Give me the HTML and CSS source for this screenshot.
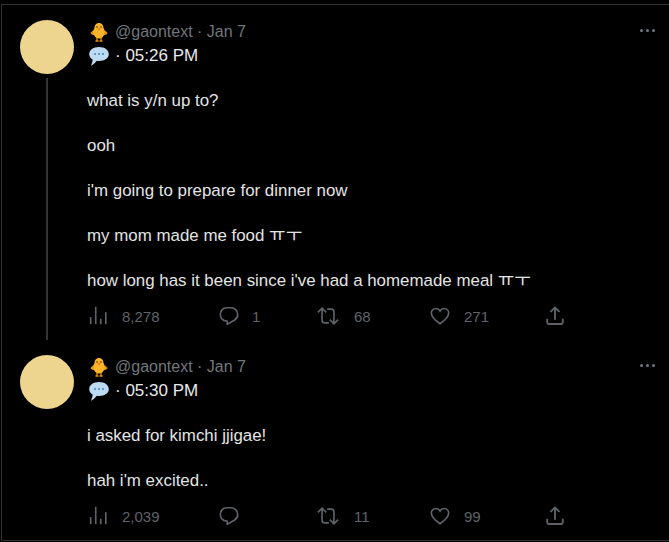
FILE: index.html
```html
<!DOCTYPE html>
<html lang="en">
<head>
<meta charset="UTF-8">
<meta name="viewport" content="width=device-width, initial-scale=1.0">
<title>@gaontext</title>
<link rel="stylesheet" href="styles.css">
</head>
<body>

<svg class="defs" width="0" height="0">
    <symbol id="chick" viewBox="0 0 20 20">
        <path d="M1.5 11 C3 9 4 8.500 5 8.500 L5 13 C3.500 13 2 12.500 1.500 11Z" fill="#e8930c"/>
        <path d="M18.500 11 C17 9 16 8.500 15 8.500 L15 13 C16.500 13 18 12.500 18.500 11Z" fill="#e8930c"/>
        <path d="M10 1 C13 1 14.500 3.500 14.500 6 C16 8 16 11 15 13 C14 15.500 12 16.500 10 16.500 C8 16.500 6 15.500 5 13 C4 11 4 8 5.500 6 C5.500 3.500 7 1 10 1Z" fill="#fdb42a"/>
        <path d="M8 16 L8 18.500 M12 16 L12 18.500 M6.500 19 L9.500 19 M10.500 19 L13.500 19" stroke="#e8930c" stroke-width="1.300"/>
        <circle cx="8" cy="5" r=".8" fill="#4a2c10"/>
        <circle cx="12" cy="5" r=".8" fill="#4a2c10"/>
        <path d="M8.500 6.500 L11.500 6.500 L10 8.200Z" fill="#e2571e"/>
    </symbol>
    <symbol id="bubble" viewBox="0 0 20 20">
        <path d="M10 1 C15.500 1 19.800 3.800 19.800 8.300 C19.800 12.300 15.500 15 10 15 C9.200 15 8.500 14.900 7.800 14.800 C6.500 16.500 4.500 18.500 1.800 19.800 C3 17.500 3.600 15.500 3.600 13.500 C1.500 12.200 .200 10.400 .200 8.300 C.200 3.800 4.500 1 10 1Z" fill="#bddcf4"/>
        <circle cx="6" cy="8" r="1" fill="#3b88c3"/>
        <circle cx="10" cy="8" r="1" fill="#3b88c3"/>
        <circle cx="14" cy="8" r="1" fill="#3b88c3"/>
    </symbol>
    <symbol id="views" viewBox="0 0 24 24">
        <path d="M4 21 V13 M9.500 21 V2 M15 21 V15 M20.500 21 V8" fill="none" stroke="currentColor" stroke-width="1.800"/>
    </symbol>
    <symbol id="reply" viewBox="0 0 24 24">
        <path d="M9.500 3 H14 C18 3 21.500 6.200 21.500 10.300 C21.500 13 20 15.200 17.800 16.600 L10 21 V17.500 H9.500 C5.500 17.500 2.500 14.200 2.500 10.300 C2.500 6.200 5.500 3 9.500 3Z" fill="none" stroke="currentColor" stroke-width="1.800" stroke-linejoin="round"/>
    </symbol>
    <symbol id="retweet" viewBox="0 0 24 24">
        <path d="M1 8 L5.500 3.500 L10 8 M5.500 4 V16.500 C5.500 18.200 6.800 19.500 8.500 19.500 H13 M23 16 L18.500 20.500 L14 16 M18.500 20 V7.500 C18.500 5.800 17.200 4.500 15.500 4.500 H11" fill="none" stroke="currentColor" stroke-width="1.800"/>
    </symbol>
    <symbol id="like" viewBox="0 0 24 24">
        <path d="M12 20.500 C7 17 2.500 13.500 2.500 8.800 C2.500 5.800 4.800 3.800 7.300 3.800 C9.300 3.800 11 4.800 12 6.800 C13 4.800 14.700 3.800 16.700 3.800 C19.200 3.800 21.500 5.800 21.500 8.800 C21.500 13.500 17 17 12 20.500Z" fill="none" stroke="currentColor" stroke-width="1.800" stroke-linejoin="round"/>
    </symbol>
    <symbol id="share" viewBox="0 0 24 24">
        <path d="M7 7.500 L12 2.800 L17 7.500 M12 3.500 V16 M3.500 15 V19 C3.500 20 4.200 20.700 5.200 20.700 H18.800 C19.800 20.700 20.500 20 20.500 19 V15" fill="none" stroke="currentColor" stroke-width="2"/>
    </symbol>
</svg>

<div id="container">

    <div class="tweet tweet-first">
        <div class="side">
            <div class="avatar"></div>
            <div class="thread"></div>
        </div>
        <div class="main">
            <div class="more"><i></i><i></i><i></i></div>
            <div class="head">
                <svg class="emoji"><use href="#chick"/></svg>
                <span class="handle">@gaontext · Jan 7</span>
            </div>
            <div class="head">
                <svg class="emoji"><use href="#bubble"/></svg>
                <span class="time">· 05:26 PM</span>
            </div>
            <div class="body">
                <p>what is y/n up to?</p>
                <p>ooh</p>
                <p>i'm going to prepare for dinner now</p>
                <p>my mom made me food <span class="kr">ㅠㅜ</span></p>
                <p>how long has it been since i've had a homemade meal <span class="kr">ㅠㅜ</span></p>
            </div>
            <div class="stats">
                <div class="stat"><svg class="icon"><use href="#views"/></svg><span class="n-views">8,278</span></div>
                <div class="stat"><svg class="icon"><use href="#reply"/></svg><span class="n-reply">1</span></div>
                <div class="stat"><svg class="icon"><use href="#retweet"/></svg><span class="n-rt">68</span></div>
                <div class="stat"><svg class="icon"><use href="#like"/></svg><span class="n-like">271</span></div>
                <div class="stat"><svg class="icon"><use href="#share"/></svg></div>
            </div>
        </div>
    </div>

    <div class="tweet tweet-last">
        <div class="side">
            <div class="avatar"></div>
        </div>
        <div class="main">
            <div class="more"><i></i><i></i><i></i></div>
            <div class="head">
                <svg class="emoji"><use href="#chick"/></svg>
                <span class="handle">@gaontext · Jan 7</span>
            </div>
            <div class="head">
                <svg class="emoji"><use href="#bubble"/></svg>
                <span class="time">· 05:30 PM</span>
            </div>
            <div class="body">
                <p>i asked for kimchi jjigae!</p>
                <p>hah i'm excited..</p>
            </div>
            <div class="stats">
                <div class="stat"><svg class="icon"><use href="#views"/></svg><span class="n-views">2,039</span></div>
                <div class="stat"><svg class="icon"><use href="#reply"/></svg></div>
                <div class="stat"><svg class="icon"><use href="#retweet"/></svg><span class="n-rt">11</span></div>
                <div class="stat"><svg class="icon"><use href="#like"/></svg><span class="n-like">99</span></div>
                <div class="stat"><svg class="icon"><use href="#share"/></svg></div>
            </div>
        </div>
    </div>

</div>

</body>
</html>
```

FILE: styles.css
```css
html, body {
    margin: 0;
    padding: 0;
    background-color: #000;
}
body {
    font-family: "Liberation Sans", "Noto Sans CJK KR", sans-serif;
    font-size: 16px;
    color: #e7e9ea;
    overflow: hidden;
    height: 542px;
}
.defs {
    position: absolute;
}
#container {
    margin: 4px 0 0 1px;
    height: 537px;
    box-sizing: border-box;
    border-top: 1px solid #2f3336;
    border-left: 1px solid #2f3336;
    border-bottom: 1px solid #2f3336;
}
.tweet {
    display: flex;
    height: 335px;
    padding-left: 18px;
    box-sizing: border-box;
}
.tweet-last {
    height: 200px;
}
.side {
    width: 54px;
    margin-top: 15px;
    margin-right: 13px;
    display: flex;
    flex-direction: column;
    align-items: center;
}
.avatar {
    width: 54px;
    height: 54px;
    border-radius: 50%;
    background-color: #edd58f;
    flex-shrink: 0;
}
.thread {
    width: 2px;
    height: 272px;
    margin-top: 4px;
    background-color: #333639;
}
.main {
    flex: 1;
    position: relative;
    margin-top: 15px;
}
.more {
    position: absolute;
    top: 9px;
    right: 14px;
    display: flex;
    gap: 3px;
}
.more i {
    width: 3px;
    height: 3px;
    border-radius: 50%;
    background-color: #71767b;
}
.head {
    display: flex;
    align-items: center;
    height: 24px;
}
.emoji {
    width: 20px;
    height: 20px;
    margin: 0 6px 0 2px;
}
.handle {
    color: #71767b;
}
.time {
    font-size: 17px;
}
.body {
    margin-top: 22px;
    font-size: 16.900px;
    line-height: 22.500px;
    color: #e2e4e5;
}
.body p {
    margin: 0 0 22.500px 0;
}
.kr {
    font-family: "Noto Sans CJK KR", sans-serif;
    font-size: 18px;
    line-height: 0;
}
.stats {
    display: grid;
    grid-template-columns: 131px 99px 112px 115px 24px;
    margin-top: -11px;
    color: #5f6368;
    font-size: 15px;
}
.stat {
    display: flex;
    align-items: center;
    height: 24px;
}
.icon {
    width: 22px;
    height: 22px;
    flex-shrink: 0;
}
.n-views { margin-left: 13px; }
.n-reply { margin-left: 12px; }
.n-rt { margin-left: 15px; }
.n-like { margin-left: 13px; }
```
